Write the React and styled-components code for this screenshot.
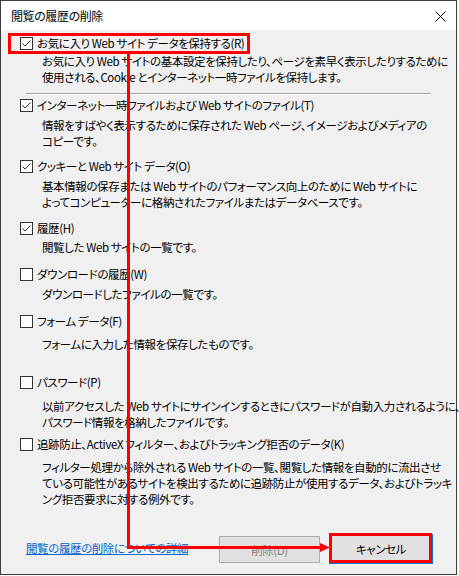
import styled, { createGlobalStyle } from "styled-components";

const GlobalStyle = createGlobalStyle`
    html, body {
        margin: 0;
        padding: 0;
        background: #ffffff;
    }
    body {
        font-family: "Noto Sans CJK JP", "Noto Sans", sans-serif;
        font-size: 11.5px;
        letter-spacing: -0.4px;
        font-feature-settings: "palt";
        color: #000;
    }
`;

// 項目データ
const options = [
    {
        label: "お気に入り Web サイト データを保持する(R)",
        checked: true,
        lines: [
            "お気に入り Web サイトの基本設定を保持したり、ページを素早く表示したりするために",
            "使用される、Cookie とインターネット一時ファイルを保持します。",
        ],
        top: 4,
        descTop: 1,
    },
    {
        label: "インターネット一時ファイルおよび Web サイトのファイル(T)",
        checked: true,
        lines: [
            "情報をすばやく表示するために保存された Web ページ、イメージおよびメディアの",
            "コピーです。",
        ],
        top: 1,
        descTop: 3,
    },
    {
        label: "クッキーと Web サイト データ(O)",
        checked: true,
        lines: [
            "基本情報の保存または Web サイトのパフォーマンス向上のために Web サイトに",
            "よってコンピューターに格納されたファイルまたはデータベースです。",
        ],
        top: 8,
        descTop: 3,
    },
    {
        label: "履歴(H)",
        checked: true,
        lines: ["閲覧した Web サイトの一覧です。"],
        top: 9,
        descTop: 2,
    },
    {
        label: "ダウンロードの履歴(W)",
        checked: false,
        lines: ["ダウンロードしたファイルの一覧です。"],
        top: 10,
        descTop: 3,
    },
    {
        label: "フォーム データ(F)",
        checked: false,
        lines: ["フォームに入力した情報を保存したものです。"],
        top: 10,
        descTop: 6,
    },
    {
        label: "パスワード(P)",
        checked: false,
        lines: [
            "以前アクセスした Web サイトにサインインするときにパスワードが自動入力されるように、",
            "パスワード情報を格納したファイルです。",
        ],
        top: 21,
        descTop: 7,
    },
    {
        label: "追跡防止、ActiveX フィルター、およびトラッキング拒否のデータ(K)",
        checked: false,
        lines: [
            "フィルター処理から除外される Web サイトの一覧、閲覧した情報を自動的に流出させ",
            "ている可能性があるサイトを検出するために追跡防止が使用するデータ、およびトラッキ",
            "ング拒否要求に対する例外です。",
        ],
        top: 5,
        descTop: 6,
    },
];

function CheckBox({ checked }) {
    return (
        <Box>
            {checked && (
                <svg width="11" height="11" viewBox="0 0 11 11">
                    <polyline points="1.5,5.5 4,8 9.5,2.5" fill="none" stroke="#333" strokeWidth="1" />
                </svg>
            )}
        </Box>
    );
}

function Option({ label, checked, lines, top, descTop }) {
    return (
        <OptionWrap top={top}>
            <LabelRow>
                <CheckBox checked={checked} />
                <Label>{label}</Label>
            </LabelRow>
            <Desc top={descTop}>
                {lines.map((line) => (
                    <DescLine key={line}>{line}</DescLine>
                ))}
            </Desc>
        </OptionWrap>
    );
}

function App() {
    return (
        <>
            <GlobalStyle />
            <Window>
                <TitleBar>
                    <Title>閲覧の履歴の削除</Title>
                    <Close>
                        <svg width="11" height="11" viewBox="0 0 11 11">
                            <path d="M0.5 0.5 L10.5 10.5 M10.5 0.5 L0.5 10.5" stroke="#000" strokeWidth="1" />
                        </svg>
                    </Close>
                </TitleBar>

                <Body>
                    <Option {...options[0]} />
                    <Separator />
                    {options.slice(1).map((opt) => (
                        <Option key={opt.label} {...opt} />
                    ))}

                    <Footer>
                        <HelpLink href="#">閲覧の履歴の削除についての詳細</HelpLink>
                        <Buttons>
                            <Button disabled>削除(D)</Button>
                            <Button primary>キャンセル</Button>
                        </Buttons>
                    </Footer>
                </Body>

                {/* 赤い注釈 */}
                <Overlay width="459" height="576" viewBox="0 0 459 576">
                    <rect x="9.5" y="34.5" width="239" height="18" fill="none" stroke="#ff0000" strokeWidth="3" />
                    <path d="M128.5 54 L128.5 547.5 L322 547.5" fill="none" stroke="#ff0000" strokeWidth="3" />
                    <polygon points="320,543 330,547.5 320,552" fill="#ff0000" />
                    <rect x="330.5" y="534.5" width="100" height="27" fill="none" stroke="#ff0000" strokeWidth="3" />
                </Overlay>
            </Window>
        </>
    );
}

const Window = styled.div`
    position: relative;
    width: 457px;
    height: 575px;
    box-sizing: border-box;
    border: 1px solid #3c3c3c;
    background: #f0f0f0;
    display: flex;
    flex-direction: column;
`;

const TitleBar = styled.div`
    height: 29px;
    flex-shrink: 0;
    background: #ffffff;
    display: flex;
    align-items: center;
    justify-content: space-between;
    padding: 0 10px 0 10px;
`;

const Title = styled.div`
    font-size: 12px;
`;

const Close = styled.div`
    width: 11px;
    height: 11px;
    display: flex;
    margin-top: 1px;
`;

const Body = styled.div`
    flex: 1;
    display: flex;
    flex-direction: column;
    padding: 0 23px 10px 19px;
`;

const OptionWrap = styled.div`
    margin-top: ${({ top }) => top}px;
`;

const LabelRow = styled.div`
    display: flex;
    align-items: center;
    height: 18px;
`;

const Box = styled.div`
    width: 13px;
    height: 13px;
    box-sizing: border-box;
    border: 1px solid #333;
    background: #fff;
    display: flex;
    align-items: center;
    justify-content: center;
    margin-right: 4px;
    flex-shrink: 0;
`;

const Label = styled.span`
    line-height: 18px;
    white-space: nowrap;
`;

const Desc = styled.div`
    margin-top: ${({ top }) => top}px;
    padding-left: 22px;
`;

const DescLine = styled.div`
    line-height: 16px;
    height: 16px;
    white-space: nowrap;
`;

const Separator = styled.div`
    margin: 8px 2px 0 6px;
    border-top: 1px solid #a0a0a0;
    border-bottom: 1px solid #ffffff;
`;

const Footer = styled.div`
    margin-top: auto;
    display: flex;
    align-items: center;
    justify-content: space-between;
    padding-left: 6px;
`;

const HelpLink = styled.a`
    color: #0066cc;
    text-decoration: underline;
    margin-top: -3px;
`;

const Buttons = styled.div`
    display: flex;
    gap: 9px;
    align-items: flex-end;
`;

const Button = styled.button`
    font-family: "Noto Sans CJK JP", "Noto Sans", sans-serif;
    font-size: 11.5px;
    letter-spacing: -0.4px;
    font-feature-settings: "palt";
    width: ${({ primary }) => (primary ? "104px" : "101px")};
    height: ${({ primary }) => (primary ? "30px" : "27px")};
    margin-bottom: ${({ primary }) => (primary ? "0" : "1px")};
    box-sizing: border-box;
    background: #e1e1e1;
    color: ${({ disabled }) => (disabled ? "#838383" : "#000")};
    border: ${({ primary }) => (primary ? "2px solid #0078d7" : "1px solid #adadad")};
    padding: 0;
`;

const Overlay = styled.svg`
    position: absolute;
    left: -1px;
    top: -1px;
    pointer-events: none;
`;

export default App;
